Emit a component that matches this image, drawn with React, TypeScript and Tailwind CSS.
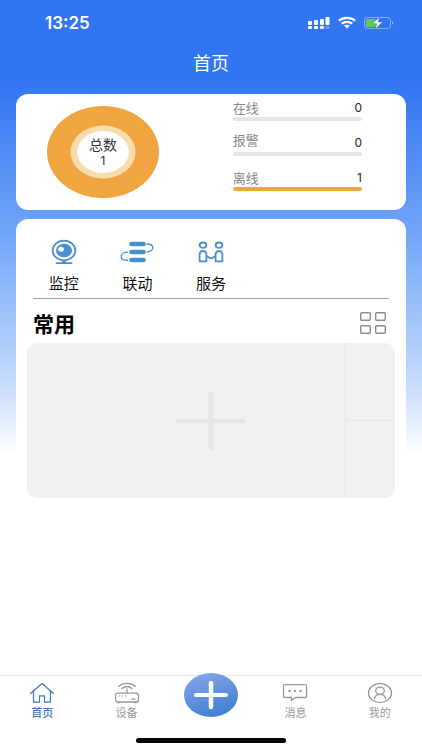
import type { ReactNode } from 'react';
import clsx from 'clsx';

interface Stat {
  label: string;
  count: number;
  tall?: boolean;
}

interface Item {
  label: string;
  icon: ReactNode;
  active?: boolean;
}

const stats: Stat[] = [
  { label: '在线', count: 0 },
  { label: '报警', count: 0, tall: true },
  { label: '离线', count: 1 },
];

const total = 1;

const CameraIcon = () => (
  <svg width="26" height="26" viewBox="0 0 26 26" fill="none" stroke="#4890d0">
    <ellipse cx="13" cy="11.5" rx="11.4" ry="9.8" strokeWidth="1.8" />
    <ellipse cx="13" cy="11.5" rx="8" ry="6.8" fill="#4890d0" stroke="none" />
    <ellipse cx="10" cy="10.2" rx="2.8" ry="2.5" fill="#fff" stroke="none" />
    <path d="M13 21v3" strokeWidth="3.4" />
    <path d="M5.5 24.2h15" strokeWidth="1.8" strokeLinecap="round" />
  </svg>
);

const LinkageIcon = () => (
  <svg width="34" height="26" viewBox="0 0 34 26" fill="none" stroke="#4890d0">
    <path d="M11.5 5h12M11.5 13h12M11.5 21h12" strokeWidth="4.6" strokeLinecap="round" />
    <path d="M27 5c3 0 5.8 1.2 5.8 3.7S30 12.9 27 12.9M7.5 13.2C4 13.2 1.2 15 1.2 17.6s2.6 3.9 6.3 3.9" strokeWidth="1.3" strokeLinecap="round" />
  </svg>
);

const ServiceIcon = () => (
  <svg width="26" height="26" viewBox="0 0 26 26" fill="none" stroke="#4890d0" strokeWidth="1.8">
    <ellipse cx="5" cy="6.2" rx="3.4" ry="2.7" />
    <ellipse cx="21" cy="6.2" rx="3.4" ry="2.7" />
    <path d="M1.6 22.3v-6.500c0-2.600 1.400-3.800 3.400-3.800s3.400 1.200 3.400 3.800v6.500zM24.400 22.300v-6.500c0-2.600-1.400-3.800-3.400-3.800s-3.400 1.200-3.400 3.800v6.500z" strokeLinejoin="round" />
    <path d="M8.400 17c1.200.2 2 2.200 4.600 2.200s3.400-2 4.600-2.200" />
  </svg>
);

const HomeIcon = () => (
  <svg width="26" height="22" viewBox="0 0 26 22" fill="none" stroke="currentColor" strokeWidth="1.2" strokeLinejoin="round" strokeLinecap="round">
    <path d="M1.500 11.500 13 1.500l11.500 10" />
    <path d="M4.500 9v11.200h6v-6.400h5v6.400h6V9" />
  </svg>
);

const DeviceIcon = () => (
  <svg width="26" height="22" viewBox="0 0 26 22" fill="none" stroke="currentColor" strokeWidth="1.3" strokeLinecap="round">
    <path d="M4.500 4.400C9 .3 17 .3 21.500 4.400M8 6.500c3-2.400 7-2.400 10 0M13 7v4" />
    <rect x="1.500" y="11.200" width="23" height="8.800" rx="2" />
    <path d="M5 14h.1M8.300 14h.1M11.600 14h.1M17.500 17.200h3.500" />
    <path d="M4 20.700h2M20 20.700h2" />
  </svg>
);

const MessageIcon = () => (
  <svg width="26" height="22" viewBox="0 0 26 22" fill="none" stroke="currentColor" strokeWidth="1.3" strokeLinejoin="round">
    <path d="M3 2.600h20c.9 0 1.500.5 1.500 1.300v10.300c0 .8-.6 1.300-1.500 1.300H13.500L9.500 18.500v-3H3c-.9 0-1.500-.5-1.500-1.300V3.900c0-.8.600-1.300 1.500-1.300z" />
    <path d="M7.500 9h.1M13 9h.1M18.500 9h.1" strokeWidth="2.400" strokeLinecap="round" />
  </svg>
);

const MineIcon = () => (
  <svg width="26" height="22" viewBox="0 0 26 22" fill="none" stroke="currentColor" strokeWidth="1.3" strokeLinecap="round">
    <ellipse cx="13" cy="11" rx="11.500" ry="9.600" />
    <ellipse cx="13" cy="8.800" rx="4.300" ry="3.600" />
    <path d="M7.500 16.500c.3-2.600 2.500-4.100 5.500-4.100s5.200 1.500 5.500 4.100" />
  </svg>
);

const actions: Item[] = [
  { label: '监控', icon: <CameraIcon /> },
  { label: '联动', icon: <LinkageIcon /> },
  { label: '服务', icon: <ServiceIcon /> },
];

const leftTabs: Item[] = [
  { label: '首页', icon: <HomeIcon />, active: true },
  { label: '设备', icon: <DeviceIcon /> },
];

const rightTabs: Item[] = [
  { label: '消息', icon: <MessageIcon /> },
  { label: '我的', icon: <MineIcon /> },
];

const StatusBar = () => (
  <div className="flex h-[46px] items-center justify-between pl-[45px] pr-7 text-white">
    <span className="pt-0.5 font-[Inter,sans-serif] text-[17px] font-semibold">13:25</span>
    <div className="flex items-center gap-2">
      <svg width="22" height="14" viewBox="0 0 22 14" fill="#fff">
        <rect x="0" y="5" width="4" height="4" rx="1" />
        <rect x="6" y="4" width="4" height="5" rx="1" />
        <rect x="12" y="3" width="4" height="6" rx="1" />
        <rect x="17.500" y="1" width="4" height="8" rx="1" />
        <rect x="0" y="10" width="4" height="3" rx="1" />
        <rect x="6" y="10" width="4" height="3" rx="1" />
        <rect x="12" y="10" width="4" height="3" rx="1" />
        <rect x="17.500" y="10" width="4" height="3" rx="1" opacity="0.3" />
      </svg>
      <svg width="18" height="14" viewBox="0 0 18 14" fill="none" stroke="#fff" strokeWidth="2.2">
        <path d="M.8 4.800C5.300.8 12.700.8 17.200 4.800" />
        <path d="M3.700 7.700c3-2.500 7.600-2.500 10.600 0" />
        <path d="M6 9.600c1.700-1.200 4.300-1.200 6 0L9 12.500z" fill="#fff" stroke="none" />
      </svg>
      <svg width="30" height="14" viewBox="0 0 30 14" fill="none">
        <rect x="0.500" y="1.500" width="26" height="11" rx="3" stroke="#fff" strokeOpacity="0.4" />
        <rect x="2" y="3" width="10" height="8" rx="1.500" fill="#65c466" />
        <path d="M28 5.500v3c.9-.3 1.400-.8 1.400-1.500S28.900 5.800 28 5.500z" fill="#fff" fillOpacity="0.5" />
        <path d="M15.700.8 8.500 7.700h4.200l-1.600 5.500 7.400-7.200h-4.300z" fill="#fff" stroke="#3275f3" strokeWidth="0.6" />
      </svg>
    </div>
  </div>
);

const TotalRing = () => (
  <div className="relative h-[92px] w-28">
    <svg className="h-full w-full" viewBox="0 0 112 92">
      <ellipse cx="56" cy="46" rx="56" ry="46" fill="#f0a540" />
      <ellipse cx="56" cy="46" rx="32.500" ry="26.500" fill="#f8dcab" />
      <ellipse cx="56" cy="46" rx="26" ry="21" fill="#fff" />
    </svg>
    <div className="absolute inset-0 flex flex-col items-center justify-center text-[#333]">
      <span className="text-[14px] leading-[18px]">总数</span>
      <span className="font-[Inter,sans-serif] text-[12px] leading-4">{total}</span>
    </div>
  </div>
);

const StatRow = ({ label, count, tall }: Stat) => (
  <div className="flex h-[35px] flex-col justify-end gap-px first:h-auto">
    <div className={clsx('flex justify-between', tall ? 'h-[19px]' : 'h-4')}>
      <span className="self-start text-[13px] leading-4 text-[#868686]">{label}</span>
      <span className="self-end font-[Inter,sans-serif] text-[12px] leading-4 text-[#222]">{count}</span>
    </div>
    <div className="h-1 shrink-0 overflow-hidden rounded-full bg-[#e6e6e6]">
      <div className="h-full bg-[#f0a540]" style={{ width: `${(count / total) * 100}%` }} />
    </div>
  </div>
);

const Tab = ({ label, icon, active }: Item) => (
  <button
    type="button"
    className={clsx(
      'flex flex-col items-center gap-px pt-[6px] text-[11px] leading-[14px]',
      active ? 'font-medium text-[#4078b8]' : 'text-[#989898]'
    )}
  >
    {icon}
    <span>{label}</span>
  </button>
);

export default function App() {
  return (
    <div className="flex min-h-screen flex-col bg-white bg-[linear-gradient(to_bottom,#3275f3_80px,#699ff8_215px,#94bdf9_300px,#c8dcfc_385px,#ffffff_455px)] font-['Noto_Sans_CJK_SC',sans-serif]">
      <StatusBar />
      <header className="flex h-8 items-center justify-center">
        <h1 className="text-[18px] leading-8 text-white">首页</h1>
      </header>

      <main className="flex flex-1 flex-col gap-[9px] px-4 pt-4">
        <section className="flex h-[116px] justify-between rounded-xl bg-white pr-11 pl-[31px]">
          <div className="flex items-center">
            <TotalRing />
          </div>
          <div className="w-[41%] pt-[6px]">
            {stats.map((stat) => (
              <StatRow key={stat.label} {...stat} />
            ))}
          </div>
        </section>

        <section className="rounded-xl bg-white px-[11px] pt-5 pb-6">
          <div className="grid grid-cols-5">
            {actions.map(({ label, icon }) => (
              <button key={label} type="button" className="flex flex-col items-center gap-2 text-[15px] leading-5 text-[#111]">
                {icon}
                <span>{label}</span>
              </button>
            ))}
          </div>

          <div className="mx-[6px] mt-[5px] flex h-[45px] items-center justify-between border-t border-[#a0a0a0] pt-1">
            <h2 className="text-[21px] leading-[30px] font-bold text-black">常用</h2>
            <button type="button" aria-label="布局" className="pr-[3px]">
              <svg width="26" height="22" viewBox="0 0 26 22" fill="none" stroke="#8c8c8c" strokeWidth="1.4">
                <rect x="0.700" y="0.700" width="9.600" height="7.600" rx="1" />
                <rect x="15.700" y="0.700" width="9.600" height="7.600" rx="1" />
                <rect x="0.700" y="13.700" width="9.600" height="7.600" rx="1" />
                <rect x="15.700" y="13.700" width="9.600" height="7.600" rx="1" />
              </svg>
            </button>
          </div>

          <div className="relative grid h-[155px] grid-cols-[13fr_2fr] grid-rows-2 overflow-hidden rounded-[10px] bg-[#f1f1f1]">
            <div className="row-span-2 border-r border-[#e6e6e6]" />
            <div className="border-b border-[#e6e6e6]" />
            <button type="button" aria-label="添加常用" className="absolute inset-0 flex items-center justify-center">
              <svg width="70" height="58" viewBox="0 0 70 58" fill="none" stroke="#e6e6e6" strokeLinecap="round">
                <path d="M2.200 29h65.600" strokeWidth="4.4" />
                <path d="M35 2.500v53" strokeWidth="5" />
              </svg>
            </button>
          </div>
        </section>
      </main>

      <nav className="grid h-[63px] grid-cols-5 border-t border-[#e4e4e4] bg-white">
        {leftTabs.map((tab) => (
          <Tab key={tab.label} {...tab} />
        ))}
        <button type="button" aria-label="添加" className="-mt-[3px] flex justify-center self-start">
          <svg width="54" height="44" viewBox="0 0 54 44" fill="none">
            <defs>
              <linearGradient id="add" x1="0.2" y1="0" x2="0.6" y2="1">
                <stop offset="0" stopColor="#86a4ec" />
                <stop offset="1" stopColor="#3f80d2" />
              </linearGradient>
            </defs>
            <ellipse cx="27" cy="22" rx="27" ry="22" fill="url(#add)" />
            <path d="M12 22h30" stroke="#fff" strokeWidth="4" strokeLinecap="round" />
            <path d="M27 10v24" stroke="#fff" strokeWidth="4.5" strokeLinecap="round" />
          </svg>
        </button>
        {rightTabs.map((tab) => (
          <Tab key={tab.label} {...tab} />
        ))}
      </nav>
      <div className="flex h-3 justify-center bg-white">
        <div className="h-[5px] w-[150px] rounded-full bg-black" />
      </div>
    </div>
  );
}
